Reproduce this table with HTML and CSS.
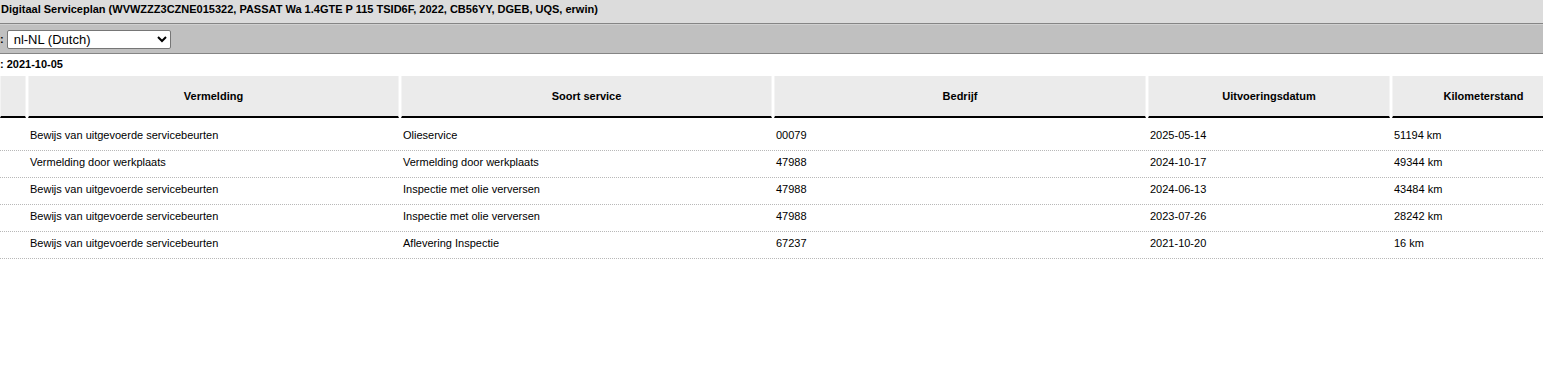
FILE: index.html
```html
<!DOCTYPE html>
<html lang="nl">
<head>
<meta charset="utf-8">
<title>Digitaal Serviceplan</title>
<link rel="stylesheet" href="styles.css">
</head>
<body>
<div class="titlebar">Digitaal Serviceplan (WVWZZZ3CZNE015322, PASSAT Wa 1.4GTE P 115 TSID6F, 2022, CB56YY, DGEB, UQS, erwin)</div>
<div class="langbar">
  <span class="label">:</span>
  <select class="lang">
    <option>nl-NL (Dutch)</option>
  </select>
</div>
<div class="dateline">: 2021-10-05</div>
<div class="table">
  <div class="thead">
    <div class="th"></div>
    <div class="th">Vermelding</div>
    <div class="th">Soort service</div>
    <div class="th">Bedrijf</div>
    <div class="th">Uitvoeringsdatum</div>
    <div class="th">Kilometerstand</div>
  </div>
  <div class="tbody">
    <div class="tr">
      <div class="td"></div>
      <div class="td">Bewijs van uitgevoerde servicebeurten</div>
      <div class="td">Olieservice</div>
      <div class="td">00079</div>
      <div class="td">2025-05-14</div>
      <div class="td">51194 km</div>
    </div>
    <div class="tr">
      <div class="td"></div>
      <div class="td">Vermelding door werkplaats</div>
      <div class="td">Vermelding door werkplaats</div>
      <div class="td">47988</div>
      <div class="td">2024-10-17</div>
      <div class="td">49344 km</div>
    </div>
    <div class="tr">
      <div class="td"></div>
      <div class="td">Bewijs van uitgevoerde servicebeurten</div>
      <div class="td">Inspectie met olie verversen</div>
      <div class="td">47988</div>
      <div class="td">2024-06-13</div>
      <div class="td">43484 km</div>
    </div>
    <div class="tr">
      <div class="td"></div>
      <div class="td">Bewijs van uitgevoerde servicebeurten</div>
      <div class="td">Inspectie met olie verversen</div>
      <div class="td">47988</div>
      <div class="td">2023-07-26</div>
      <div class="td">28242 km</div>
    </div>
    <div class="tr">
      <div class="td"></div>
      <div class="td">Bewijs van uitgevoerde servicebeurten</div>
      <div class="td">Aflevering Inspectie</div>
      <div class="td">67237</div>
      <div class="td">2021-10-20</div>
      <div class="td">16 km</div>
    </div>
  </div>
</div>
</body>
</html>
```
FILE: styles.css
```css
html, body {
  margin: 0;
  padding: 0;
  background: #ffffff;
  overflow: hidden;
}
body {
  font-family: "Liberation Sans", Arial, sans-serif;
  font-size: 11px;
  color: #000;
}
.titlebar {
  height: 23px;
  line-height: 19px;
  background: #dcdcdc;
  border-bottom: 1px solid #858585;
  font-weight: bold;
  font-size: 11px;
  padding-left: 1px;
  white-space: nowrap;
}
.langbar {
  background: #c0c0c0;
  border-top: 1px solid #d0d0d0;
  border-bottom: 1px solid #858585;
  display: flex;
  align-items: center;
  gap: 3px;
  box-sizing: border-box;
  height: 30px;
}
.langbar .label {
  font-weight: bold;
  font-size: 11px;
}
.lang {
  width: 164px;
  height: 19px;
  font-family: "Liberation Sans", Arial, sans-serif;
  font-size: 13px;
  padding: 0 0 0 2px;
  border: 1px solid #767676;
  border-radius: 2px;
  background: #fff;
  color: #000;
}
.dateline {
  font-weight: bold;
  font-size: 11px;
  padding: 4px 0 0 0;
  height: 17px;
  line-height: 13px;
}
.table {
  margin-top: 1px;
  width: 1575px;
}
.thead, .tr {
  display: grid;
  grid-template-columns: 26px 371px 371px 372px 242px 183px;
  column-gap: 2px;
}
.th {
  background: #ebebeb;
  height: 40px;
  border-bottom: 2px solid #000;
  border-left: 1px solid #f4f4f4;
  border-right: 1px solid #f4f4f4;
  display: flex;
  align-items: center;
  justify-content: center;
  font-weight: bold;
  font-size: 11px;
}
.tbody {
  padding-top: 6px;
}
.tr {
  height: 27px;
  border-bottom: 1px dotted #b8b8b8;
  box-sizing: border-box;
  align-items: start;
}
.td {
  padding: 5px 0 0 2px;
  line-height: 13px;
  white-space: nowrap;
}
```
